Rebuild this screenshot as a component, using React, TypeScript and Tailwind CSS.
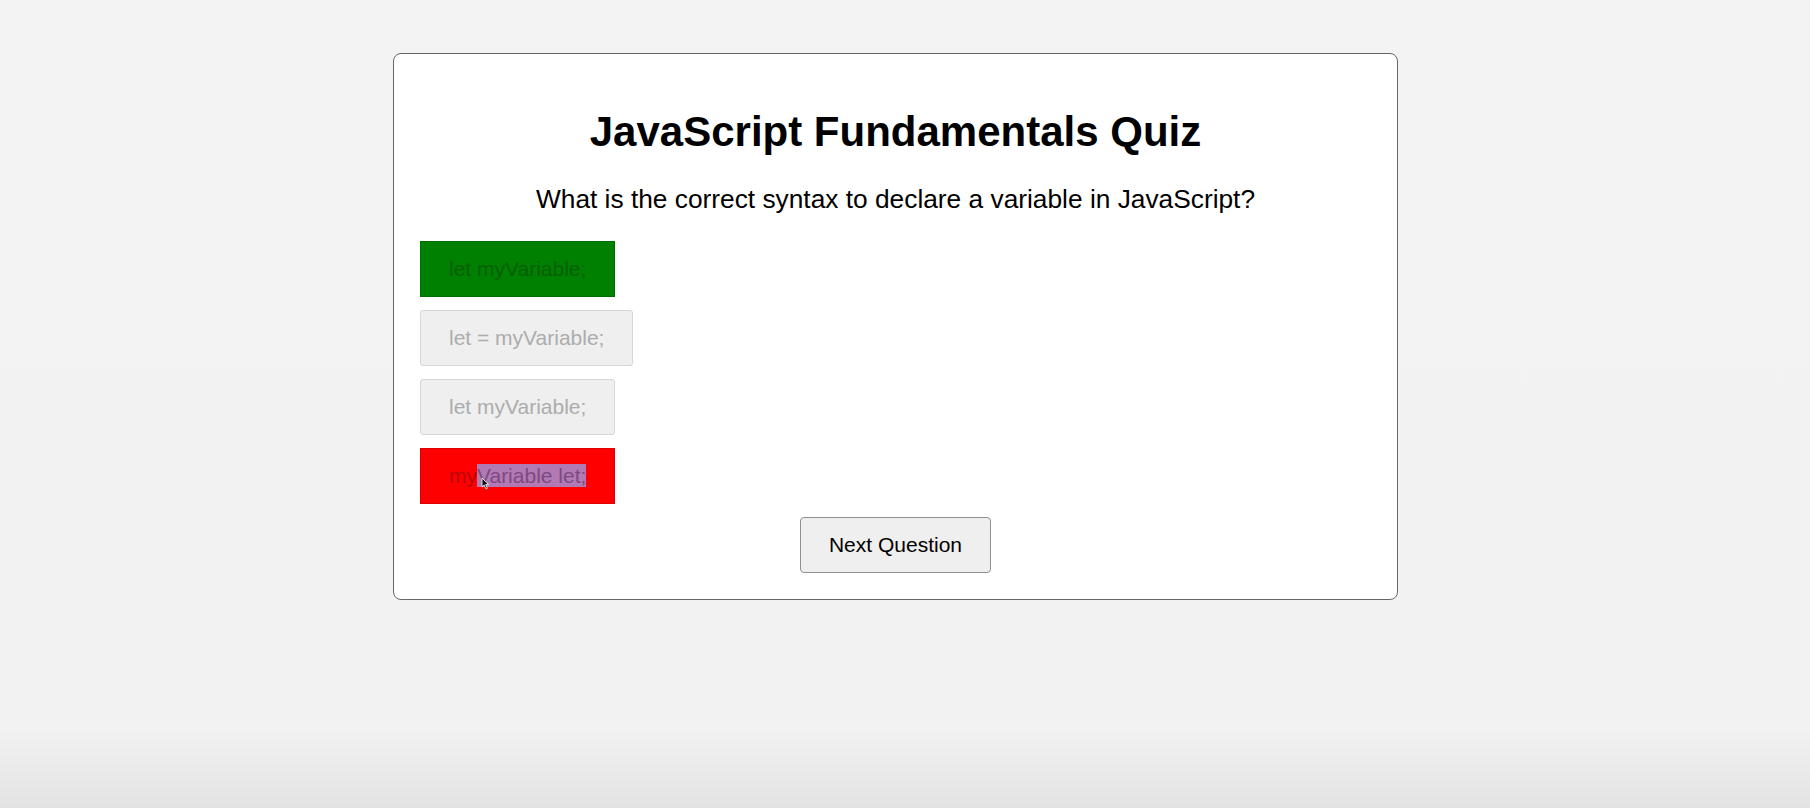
import React from 'react';

const options = [
  { label: 'let myVariable;', state: 'correct' },
  { label: 'let = myVariable;', state: 'idle' },
  { label: 'let myVariable;', state: 'idle' },
  { label: 'myVariable let;', state: 'wrong' },
];

function Cursor() {
  return (
    <svg
      className="absolute left-[60px] top-[28px]"
      width="9"
      height="13"
      viewBox="0 0 9 13"
    >
      <path d="M1 1 L1 10 L3.2 8 L5 12 L6.4 11.3 L4.7 7.5 L7.6 7.5 Z" fill="#111" stroke="#fff" strokeWidth="0.8" />
    </svg>
  );
}

function OptionButton({ label, state }: { label: string; state: string }) {
  let cls = 'bg-[#efefef] border-[#d6d6d6] text-[#acacac] rounded-[3px]';
  if (state === 'correct') cls = 'bg-[#008000] border-[#006d00] text-[#065e06]';
  if (state === 'wrong') cls = 'bg-[#ff0000] border-[#dd0000] text-[#b70505]';

  return (
    <button
      disabled
      className={`relative self-start border px-[28px] py-[15px] text-[21px] leading-[24px] ${cls}`}
    >
      {state === 'wrong' ? (
        <>
          my<span className="bg-[#b27ab4] text-[#7d4a80]">Variable let;</span>
          <Cursor />
        </>
      ) : (
        label
      )}
    </button>
  );
}

export default function App() {
  return (
    <div
      className="min-h-[808px] bg-[linear-gradient(to_bottom,#f3f3f3_0%,#f2f2f2_90%,#e3e3e3_100%)] pt-[53px] pl-[393px]"
      style={{ fontFamily: '"Liberation Sans", Arial, sans-serif' }}
    >
      <div className="flex w-[1005px] flex-col rounded-[8px] border border-[#666] bg-white px-[26px] pt-[54px] pb-[26px]">
        <h1 className="text-center text-[42px] font-bold leading-[48px] text-black">
          JavaScript Fundamentals Quiz
        </h1>
        <p className="mt-[28px] text-center text-[26.3px] leading-[30px] text-black">
          What is the correct syntax to declare a variable in JavaScript?
        </p>

        <div className="mt-[27px] flex flex-col gap-[13px]">
          {options.map((o, i) => (
            <OptionButton key={i} label={o.label} state={o.state} />
          ))}
        </div>

        <button className="mt-[13px] self-center rounded-[4px] border border-[#8f8f8f] bg-[#efefef] px-[28px] py-[15px] text-[21px] leading-[24px] text-black">
          Next Question
        </button>
      </div>
    </div>
  );
}
